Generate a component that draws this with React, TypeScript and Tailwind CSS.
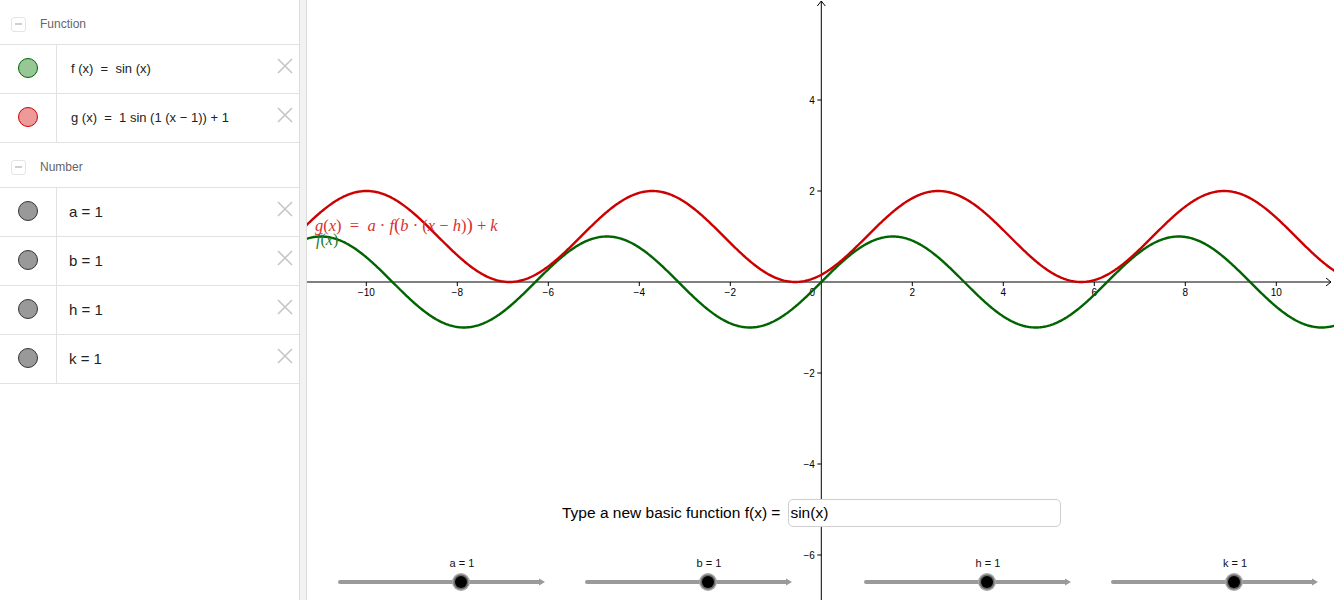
const GL = 307;
const W = 1334 - GL;
const H = 600;
const OX = 821.3 - GL;
const OY = 282;
const S = 45.5;

const sans = { fontFamily: '"Liberation Sans", Arial, sans-serif' };
const serif = { fontFamily: '"Liberation Serif", "DejaVu Serif", serif', whiteSpace: "pre" as const };

function curve(fn: (x: number) => number) {
  const pts: string[] = [];
  for (let px = -2; px <= W + 2; px += 1) {
    const x = (px - OX) / S;
    pts.push(`${px === -2 ? "M" : "L"}${px},${(OY - fn(x) * S).toFixed(2)}`);
  }
  return pts.join(" ");
}

const minus = (v: number) => (v < 0 ? "\u2212" + Math.abs(v) : String(v));

function CloseIcon() {
  return (
    <svg width="16" height="16" viewBox="0 0 16 16" className="shrink-0">
      <path d="M1 1 L15 15 M15 1 L1 15" stroke="#c6c6c6" strokeWidth="1.6" />
    </svg>
  );
}

function GroupHeader({ title }: { title: string }) {
  return (
    <div className="flex h-[45px] items-center gap-[14px] border-b border-[#e2e2e2] pl-[11px] pt-[4px]">
      <span className="flex h-[15px] w-[15px] items-center justify-center rounded-[3px] border border-[#e4e4e4]">
        <span className="h-[1.5px] w-[7px] bg-[#cfcfcf]" />
      </span>
      <span className="text-[12px] text-[#666]">{title}</span>
    </div>
  );
}

function Row({ dot, ring, label, size, pad }: { dot: string; ring: string; label: string; size: string; pad: string }) {
  return (
    <div className="flex h-[49px] border-b border-[#e2e2e2]">
      <div className="flex w-[57px] shrink-0 items-center justify-center border-r border-[#e2e2e2] pb-[3px]">
        <span className="h-[20px] w-[20px] rounded-full border" style={{ background: dot, borderColor: ring }} />
      </div>
      <div className={`flex flex-1 items-center whitespace-pre text-[#222] ${size} ${pad}`}>{label}</div>
      <div className="pr-[6px] pt-[13px]">
        <CloseIcon />
      </div>
    </div>
  );
}

function Slider({ x, name }: { x: number; name: string }) {
  const x0 = x - GL;
  const knob = x0 + 121;
  return (
    <g>
      <text x={knob + 1} y={567} fontSize="11" textAnchor="middle" fill="#111" style={sans}>
        {name} = 1
      </text>
      <line x1={x0} y1={582} x2={x0 + 200} y2={582} stroke="#9a9a9a" strokeWidth="4" strokeLinecap="round" />
      <path d={`M${x0 + 199} 578.5 L${x0 + 205} 582 L${x0 + 199} 585.5 Z`} fill="#9a9a9a" />
      <circle cx={knob} cy={582} r={9} fill="#a8a8a8" />
      <circle cx={knob} cy={582} r={7.6} fill="#6a6a6a" />
      <circle cx={knob} cy={582} r={6} fill="#000" />
    </g>
  );
}

function Graph() {
  const xs = [-10, -8, -6, -4, -2, 2, 4, 6, 8, 10];
  const ys = [4, 2, -2, -4, -6];
  return (
    <svg width={W} height={H} viewBox={`0 0 ${W} ${H}`} className="block">
      {/* axes */}
      <line x1={0} y1={OY} x2={W - 3} y2={OY} stroke="#000" strokeWidth="1" />
      <path d={`M${W - 8} ${OY - 4} L${W - 3} ${OY} L${W - 8} ${OY + 4}`} fill="none" stroke="#000" strokeWidth="1" />
      <line x1={OX} y1={1} x2={OX} y2={H} stroke="#000" strokeWidth="1" />
      <path d={`M${OX - 4} 6 L${OX} 1 L${OX + 4} 6`} fill="none" stroke="#000" strokeWidth="1" />
      {xs.map((v) => (
        <g key={v}>
          <line x1={OX + v * S} y1={OY} x2={OX + v * S} y2={OY + 4} stroke="#000" strokeWidth="1" />
          <text x={OX + v * S} y={OY + 14} fontSize="10" textAnchor="middle" fill="#000" style={sans}>
            {minus(v)}
          </text>
        </g>
      ))}
      {ys.map((v) => (
        <g key={v}>
          <line x1={OX - 4} y1={OY - v * S} x2={OX} y2={OY - v * S} stroke="#000" strokeWidth="1" />
          <text x={OX - 6.5} y={OY - v * S + 3.5} fontSize="10" textAnchor="end" fill="#000" style={sans}>
            {minus(v)}
          </text>
        </g>
      ))}
      <text x={OX - 9} y={OY + 14} fontSize="10" textAnchor="middle" fill="#000" style={sans}>
        0
      </text>

      {/* curves */}
      <path d={curve((x) => Math.sin(x))} fill="none" stroke="#006400" strokeWidth="2.4" />
      <path d={curve((x) => Math.sin(x - 1) + 1)} fill="none" stroke="#cc0000" strokeWidth="2.4" />

      {/* labels */}
      <text x={8} y={231} fontSize="16.5" fill="#d83030" style={serif}>
        <tspan fontStyle="italic">g</tspan>(<tspan fontStyle="italic">x</tspan>){"  =  "}
        <tspan fontStyle="italic">a</tspan>{" · "}
        <tspan fontStyle="italic">f</tspan>
        <tspan fontSize="19">(</tspan>
        <tspan fontStyle="italic">b</tspan>{" · ("}
        <tspan fontStyle="italic">x</tspan>{" − "}
        <tspan fontStyle="italic">h</tspan>)<tspan fontSize="19">)</tspan>{" + "}
        <tspan fontStyle="italic">k</tspan>
      </text>
      <text x={9} y={245} fontSize="16" fill="#1f7a1f" style={serif}>
        <tspan fontStyle="italic">f</tspan>(<tspan fontStyle="italic">x</tspan>)
      </text>

      {/* sliders */}
      <Slider x={340} name="a" />
      <Slider x={587} name="b" />
      <Slider x={866} name="h" />
      <Slider x={1113} name="k" />
    </svg>
  );
}

export default function App() {
  return (
    <div className="flex h-[600px] w-[1334px] overflow-hidden bg-white" style={sans}>
      <aside className="w-[300px] shrink-0 border-r border-[#dcdcdc]">
        <GroupHeader title="Function" />
        <Row dot="#97c797" ring="#006400" label="f (x)  =  sin (x)" size="text-[13px]" pad="pl-[14px]" />
        <Row dot="#ef9a9a" ring="#cc0000" label="g (x)  =  1 sin (1 (x − 1)) + 1" size="text-[13px]" pad="pl-[14px]" />
        <GroupHeader title="Number" />
        <Row dot="#999999" ring="#333333" label="a = 1" size="text-[15px]" pad="pl-[12px]" />
        <Row dot="#999999" ring="#333333" label="b = 1" size="text-[15px]" pad="pl-[12px]" />
        <Row dot="#999999" ring="#333333" label="h = 1" size="text-[15px]" pad="pl-[12px]" />
        <Row dot="#999999" ring="#333333" label="k = 1" size="text-[15px]" pad="pl-[12px]" />
      </aside>
      <div className="w-[7px] shrink-0 border-r border-[#dcdcdc] bg-[#f2f2f2]" />
      <main className="relative flex-1">
        <Graph />
        <div className="absolute left-[255px] top-[499px] flex items-center gap-[8px]">
          <span className="whitespace-pre text-[15.5px] text-black">Type a new basic function f(x) =</span>
          <div className="flex h-[28px] w-[273px] items-center rounded-[5px] border border-[#cfcfcf] bg-white pl-[1px] text-[15.5px] text-black">
            sin(x)
          </div>
        </div>
      </main>
    </div>
  );
}
